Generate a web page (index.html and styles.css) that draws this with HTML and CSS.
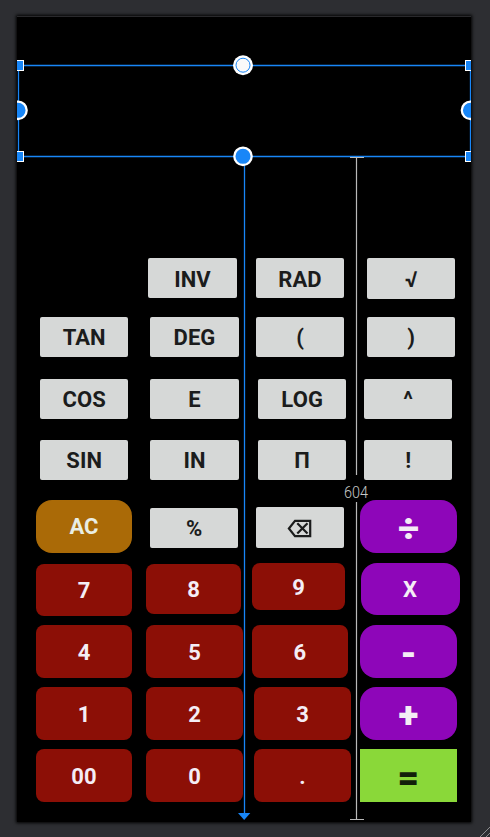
FILE: index.html
```html
<!DOCTYPE html>
<html lang="en">
<head>
<meta charset="utf-8">
<title>Calculator layout</title>
<link rel="stylesheet" href="styles.css">
</head>
<body>
<main class="screen">
  <div class="display"></div>
  <div class="pad">
    <div class="row row-inv"><button class="key fn">INV</button><button class="key fn">RAD</button><button class="key fn low">√</button></div>
    <div class="row row-tan"><button class="key fn">TAN</button><button class="key fn">DEG</button><button class="key fn">(</button><button class="key fn">)</button></div>
    <div class="row row-cos"><button class="key fn">COS</button><button class="key fn">E</button><button class="key fn">LOG</button><button class="key fn">^</button></div>
    <div class="row row-sin"><button class="key fn">SIN</button><button class="key fn">IN</button><button class="key fn">П</button><button class="key fn">!</button></div>
    <div class="row row-ac"><button class="key clear">AC</button><button class="key fn percent">%</button><button class="key fn back" aria-label="Delete"><svg width="26" height="20" viewBox="0 0 26 20"><path d="M8 1.9H23.2V17.1H8L1.9 9.5Z M10.3 4.3L20.5 14.5M20.5 4.3L10.3 14.5" fill="none" stroke="#1b1c1c" stroke-width="2.2"/></svg></button><button class="key op big div">÷</button></div>
    <div class="row row-7"><button class="key num">7</button><button class="key num eight">8</button><button class="key num nine">9</button><button class="key op times">X</button></div>
    <div class="row row-4"><button class="key num">4</button><button class="key num">5</button><button class="key num">6</button><button class="key op big">-</button></div>
    <div class="row row-1"><button class="key num">1</button><button class="key num">2</button><button class="key num">3</button><button class="key op big">+</button></div>
    <div class="row row-0"><button class="key num">00</button><button class="key num">0</button><button class="key num">.</button><button class="key equals big">=</button></div>
  </div>
  <svg class="guides" width="454" height="806" viewBox="17 16 454 806">
    <g class="edge"><path d="M17 65.5H471M17 156.5H471M18.5 65V157M470.5 65V157M244.5 157V814"/></g>
    <path class="arrow" d="M238 813H250.300L244.200 820Z"/>
    <g class="ruler"><path d="M350 157.500H364M356.500 157V475M356.500 502V819M350 819.500H364"/></g>
    <text class="measure" x="344" y="498" textLength="24" lengthAdjust="spacingAndGlyphs">604</text>
    <g class="handle">
      <rect x="13.500" y="60.500" width="10" height="10"/><rect x="13.500" y="151.500" width="10" height="10"/>
      <rect x="465.500" y="60.500" width="10" height="10"/><rect x="465.500" y="151.500" width="10" height="10"/>
    </g>
    <g class="anchor"><circle cx="18" cy="110.300" r="8.700"/><circle cx="470.500" cy="110.300" r="8.700"/><circle cx="243" cy="156.300" r="8.700"/></g>
    <circle cx="243" cy="65.200" r="10" fill="#fff"/><circle cx="243" cy="65.200" r="7" fill="#fafafa" stroke="#1886f7"/>
  </svg>
</main>
<svg class="grip" width="10" height="10" viewBox="0 0 10 10"><path d="M0 10L10 0M6 10L10 6" stroke="#8b8c8e"/></svg>
</body>
</html>
```
FILE: styles.css
```css
* { box-sizing: border-box; }
body {
  margin: 0;
  height: 837px;
  overflow: hidden;
  padding: 16px 17px;
  background: #2d2e32;
  font-family: Roboto, "Liberation Sans", sans-serif;
}
.screen {
  position: relative;
  width: 454px;
  height: 806px;
  background: #000;
  border-top: 1px solid #29292c;
  box-shadow: 0 0 3px 1px #000;
}
.display { height: 141px; }
.pad { padding-top: 100px; }
.row { display: grid; align-items: start; height: 40px; }
.key {
  display: flex;
  align-items: center;
  justify-content: center;
  height: 53px;
  padding: 2px 0 0;
  border: 0;
  font: bold 22px/26px Roboto, "Liberation Sans", sans-serif;
  letter-spacing: 0.1px;
}
.fn { height: 40px; border-radius: 2px; background: #d6d8d7; color: #1b1c1c; }
.num { border-radius: 8px; background: #8c0f06; color: #f4edf5; }
.op { border-radius: 16px; background: #8e06b9; color: #f4edf5; }
.clear { border-radius: 16px; background: #aa6a07; color: #e9eee4; }
.equals { background: #8ad839; color: #12200a; }
.big { font-size: 37px; font-weight: 900; padding-top: 4px; }

.row-inv { grid-template-columns: 89px 88px 88px; column-gap: 19px; padding: 0 0 0 131px; }
.row-inv .key { padding-top: 3px; }
.low { margin-left: 4px; margin-right: -4px; height: 41px; }
.row-tan { grid-template-columns: 110.300px 105.700px 111px 88px; padding-left: 23px; margin-top: 19px; }
.row-tan .key, .row-cos .key, .row-sin .key { width: 88.400px; }
.row-cos, .row-sin { grid-template-columns: 110.300px 107.700px 106px 88px; padding-left: 23px; margin-top: 21.500px; }

.row-ac, .row-7, .row-4, .row-1, .row-0 { height: 53px; padding-left: 19px; }
.row-ac { grid-template-columns: 96px 88px 88px 97px; justify-content: start; margin-top: 20px; }
.clear { padding-top: 1px; }
.percent { margin: 8px -18.300px 0 18.300px; }
.back { height: 41px; margin: 7px -35.500px 0 35.500px; }
.div { margin: 0 -52px 0 52px; }
.row-7 { grid-template-columns: 96px 95px 93px 98px; column-gap: 14px; margin-top: 10px; }
.row-7 .key:first-child { height: 52px; margin-top: 1px; }
.row-7 .eight { height: 50px; margin-top: 1px; }
.nine { height: 47px; width: 93px; margin-left: -3px; }
.row-7 .times { height: 52px; margin-left: -1.500px; width: 99px; padding-top: 1px; }
.row-4, .row-1, .row-0 { grid-template-columns: 96px 97px 97px 97px; column-gap: 14px; margin-top: 9px; }
.row-4 .key:nth-child(3) { width: 96.500px; margin-left: -5.500px; }
.row-1 .key:nth-child(3), .row-0 .key:nth-child(3) { width: 97px; margin-left: -3px; }
.row-4 .key:nth-child(4), .row-1 .key:nth-child(4), .row-0 .key:nth-child(4) { width: 97px; margin-left: -8px; }

.guides { position: absolute; left: 0; top: -1px; overflow: hidden; }
.edge { fill: none; stroke: #1886f7; stroke-width: 1.300px; }
.arrow { fill: #1886f7; }
.ruler { fill: none; stroke: #b9b9b9; stroke-width: 1.200px; }
.measure { font: 300 16px Roboto, sans-serif; fill: #c8c8c8; }
.handle { fill: #1886f7; stroke: #fff; }
.anchor { fill: #1886f7; stroke: #fff; stroke-width: 2.300px; }
.grip { position: absolute; right: 0; bottom: 0; }
```
